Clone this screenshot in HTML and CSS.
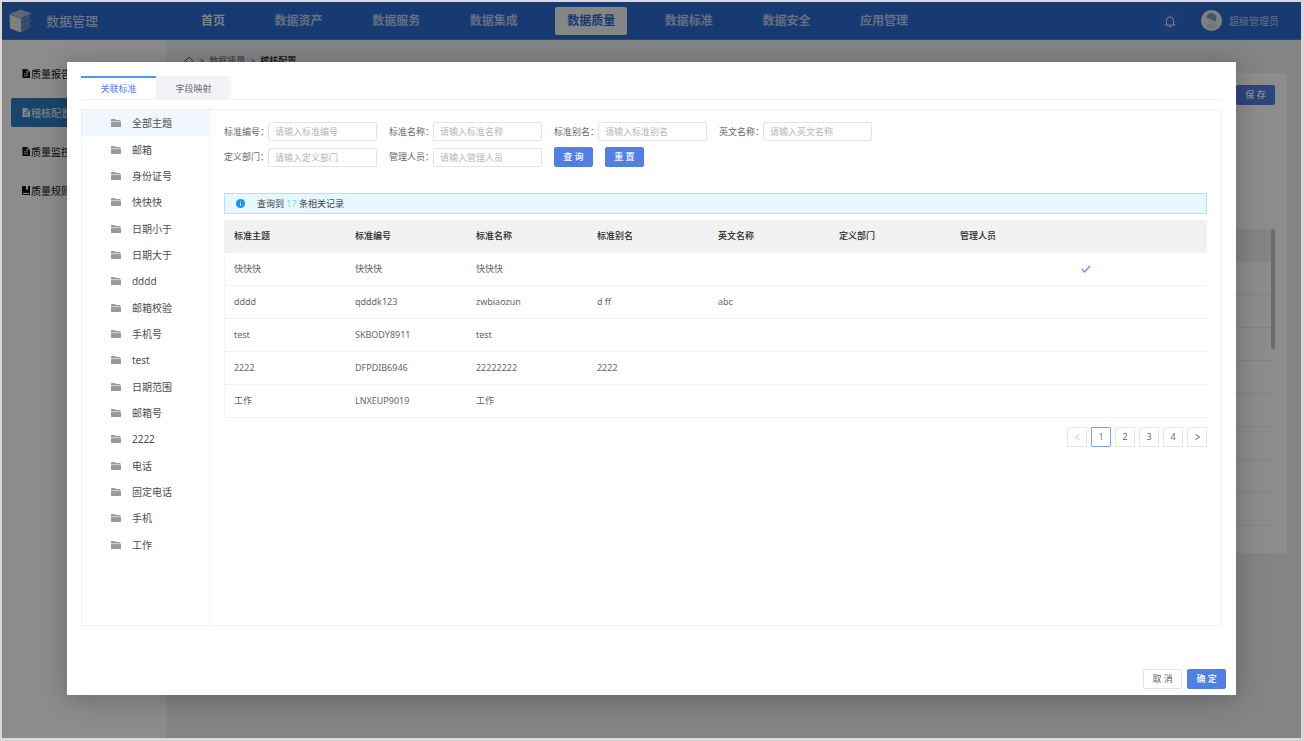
FILE: index.html
```html
<!DOCTYPE html>
<html lang="zh-CN">
<head>
<meta charset="utf-8">
<title>数据管理</title>
<link rel="stylesheet" href="styles.css">
</head>
<body>
<svg class="defs" aria-hidden="true">
  <symbol id="folder" viewBox="0 0 20 16"><path fill="#9c9c9c" d="M1 0h7l2 2h8a1 1 0 0 1 1 1v2H0V1a1 1 0 0 1 1-1z"/><path fill="#999" d="M0 6h20v9a1 1 0 0 1-1 1H1a1 1 0 0 1-1-1z"/><path stroke="#c8c8c8" d="M0 5.500h20"/></symbol>
  <symbol id="doc" viewBox="0 0 16 18"><path fill="currentColor" fill-rule="evenodd" d="M1 0h9l6 6v12H1zM9 2v5h5zM4 9v1.500h8V9zm0 4v1.500h8V13z"/></symbol>
  <symbol id="book" viewBox="0 0 16 18"><path fill="currentColor" fill-rule="evenodd" d="M2 0h6v8l2-2 2 2V0h4v18H2a2 2 0 0 1-2-2V2a2 2 0 0 1 2-2zm0 14v2h12v-2z"/></symbol>
</svg>
<div class="app">
  <header class="header">
    <div class="logo">
      <svg viewBox="0 0 48 48"><path fill="#a9bbd9" d="M1 10 23 1l22 7-21 10z"/><path fill="#ece8e2" d="M1 11l23 8v28L2 39z"/><path fill="#6b92d2" d="M24 19l21-10-5 10 5 2-5 9 5 2-5 7-16 8z"/><path fill="#4a7acb" d="M24 27l16-8 5 2-21 8zM24 38l16-8 5 2-21 8z"/></svg>
    </div>
    <h1 class="brand">数据管理</h1>
    <nav class="nav">
      <a class="home" href="#">首页</a><a href="#">数据资产</a><a href="#">数据服务</a><a href="#">数据集成</a><a class="active" href="#">数据质量</a><a href="#">数据标准</a><a href="#">数据安全</a><a href="#">应用管理</a>
    </nav>
    <div class="user">
      <button class="bell" aria-label="通知"><svg viewBox="0 0 24 24" fill="none" stroke="currentColor" stroke-width="2"><path d="M1 20h22M5 20v-9a7 7 0 0 1 14 0v9M12 4V1M9 23h6"/></svg></button>
      <svg class="avatar" viewBox="0 0 40 40"><circle cx="20" cy="20" r="20" fill="#efefe9"/><circle cx="20" cy="20" r="16" fill="#dfe9e8"/><path fill="#c3dcde" d="M9 32c2-9 20-9 22 0-6 6-16 6-22 0z"/><circle cx="20" cy="20" r="8" fill="#eadccf"/><path fill="#6f9eb3" d="M11 15c0-12 18-12 18 0v6c-5 1-9-5-18-6z"/></svg>
      <span>超级管理员</span>
    </div>
  </header>
  <div class="body">
    <aside class="side">
      <a href="#"><svg><use href="#doc"/></svg>质量报告</a>
      <a class="active" href="#"><svg><use href="#doc"/></svg>稽核配置</a>
      <a href="#"><svg><use href="#doc"/></svg>质量监控</a>
      <a href="#"><svg><use href="#book"/></svg>质量规则</a>
    </aside>
    <main class="content">
      <div class="crumbs"><svg viewBox="0 0 20 20" fill="none" stroke="currentColor" stroke-width="2"><path d="M1 11l9-9 9 9M4 10v9h12v-9"/></svg><span>&gt;</span><span>数据质量</span><span>&gt;</span><b>稽核配置</b></div>
      <section class="card">
        <button class="btn primary">保 存</button>
        <div class="back-list"><div class="back-rows"><i></i><i></i><i></i><i></i><i></i><i></i><i></i><i></i><i></i></div><div class="thumb"></div></div>
      </section>
    </main>
  </div>
  <div class="mask">
    <div class="modal" role="dialog" aria-label="关联标准">
      <div class="tabs" role="tablist"><button class="tab on" role="tab" aria-selected="true">关联标准</button><button class="tab" role="tab">字段映射</button></div>
      <div class="panel">
        <ul class="tree">
          <li class="on"><svg><use href="#folder"/></svg>全部主题</li>
          <li><svg><use href="#folder"/></svg>邮箱</li>
          <li><svg><use href="#folder"/></svg>身份证号</li>
          <li><svg><use href="#folder"/></svg>快快快</li>
          <li><svg><use href="#folder"/></svg>日期小于</li>
          <li><svg><use href="#folder"/></svg>日期大于</li>
          <li><svg><use href="#folder"/></svg>dddd</li>
          <li><svg><use href="#folder"/></svg>邮箱校验</li>
          <li><svg><use href="#folder"/></svg>手机号</li>
          <li><svg><use href="#folder"/></svg>test</li>
          <li><svg><use href="#folder"/></svg>日期范围</li>
          <li><svg><use href="#folder"/></svg>邮箱号</li>
          <li><svg><use href="#folder"/></svg>2222</li>
          <li><svg><use href="#folder"/></svg>电话</li>
          <li><svg><use href="#folder"/></svg>固定电话</li>
          <li><svg><use href="#folder"/></svg>手机</li>
          <li><svg><use href="#folder"/></svg>工作</li>
        </ul>
        <div class="main">
          <form class="filters">
            <div class="field"><label for="f1">标准编号：</label><input id="f1" placeholder="请输入标准编号"></div>
            <div class="field"><label for="f2">标准名称：</label><input id="f2" placeholder="请输入标准名称"></div>
            <div class="field"><label for="f3">标准别名：</label><input id="f3" placeholder="请输入标准别名"></div>
            <div class="field"><label for="f4">英文名称：</label><input id="f4" placeholder="请输入英文名称"></div>
            <div class="field"><label for="f5">定义部门：</label><input id="f5" placeholder="请输入定义部门"></div>
            <div class="field"><label for="f6">管理人员：</label><input id="f6" placeholder="请输入管理人员"></div>
            <div class="actions"><button type="button" class="btn primary">查 询</button><button type="button" class="btn primary">重 置</button></div>
          </form>
          <div class="alert"><svg viewBox="0 0 18 18"><circle cx="9" cy="9" r="9" fill="#1890ff"/><path stroke="#d6ecff" stroke-width="2" d="M9 4v2M9 8v6"/></svg><span>查询到 <em>17</em> 条相关记录</span></div>
          <table class="grid">
            <thead><tr><th>标准主题</th><th>标准编号</th><th>标准名称</th><th>标准别名</th><th>英文名称</th><th>定义部门</th><th>管理人员</th><th class="last"></th></tr></thead>
            <tbody>
              <tr><td>快快快</td><td>快快快</td><td>快快快</td><td></td><td></td><td></td><td></td><td><svg class="check" viewBox="0 0 20 16" fill="none" stroke="#5b8def" stroke-width="2.400"><path d="M2 8l5 6L18 2"/></svg></td></tr>
              <tr><td>dddd</td><td>qdddk123</td><td>zwbiaozun</td><td>d ff</td><td>abc</td><td></td><td></td><td></td></tr>
              <tr><td>test</td><td>SKBODY8911</td><td>test</td><td></td><td></td><td></td><td></td><td></td></tr>
              <tr><td>2222</td><td>DFPDIB6946</td><td>22222222</td><td>2222</td><td></td><td></td><td></td><td></td></tr>
              <tr><td>工作</td><td>LNXEUP9019</td><td>工作</td><td></td><td></td><td></td><td></td><td></td></tr>
            </tbody>
          </table>
          <div class="pages">
            <button class="off" aria-label="上一页" disabled><svg viewBox="0 0 10 12"><path d="M8 2L2 6l6 4"/></svg></button><button class="on">1</button><button>2</button><button>3</button><button>4</button><button aria-label="下一页"><svg viewBox="0 0 10 12"><path d="M2 2l6 4-6 4"/></svg></button>
          </div>
        </div>
      </div>
      <footer class="foot"><button class="btn">取 消</button><button class="btn primary">确 定</button></footer>
    </div>
  </div>
</div>
</body>
</html>
```
FILE: styles.css
```css
* { box-sizing: border-box; }
body {
  margin: 0;
  padding: 2px 3px 3px 2px;
  min-height: 100vh;
  display: flex;
  background: #d9d9d9;
  color: #666;
  font: 9px/14px "Noto Sans", "Noto Sans CJK SC", sans-serif;
}
button, input { font: inherit; color: inherit; margin: 0; }
a { color: inherit; text-decoration: none; }
.defs { position: absolute; width: 0; height: 0; }

.app { position: relative; flex: 1; display: flex; flex-direction: column; }
.header {
  display: flex;
  align-items: center;
  height: 38px;
  background: #2c6ad1;
  border-bottom: 1px solid #4d83da;
  color: #b9cbea;
}
.logo { width: 38px; height: 37px; padding: 7px; background: #3069c8; }
.logo svg { display: block; width: 24px; height: 24px; }
.brand { margin: 0 0 0 6px; width: 143px; font-size: 13px; font-weight: 400; line-height: 18px; color: #d5e1f5; }
.nav { flex: 0 0 731px; display: flex; justify-content: space-between; padding-top: 1px; font-size: 12px; font-weight: 700; line-height: 28px; }
.nav a { padding: 0 12px; border-radius: 2px; }
.nav .home { color: #e4ecf8; }
.nav .active { background: #f4f4f4; color: #2c6ad1; }
.user { margin-left: auto; padding-right: 22px; display: flex; align-items: center; font-size: 10px; }
.bell { width: 24px; height: 24px; padding: 6px; border: 0; border-radius: 50%; background: #316dd1; color: #dce6f6; }
.bell svg { display: block; width: 12px; height: 12px; }
.avatar { width: 21px; height: 21px; margin: 0 7px 0 19px; }

.body { flex: 1; display: flex; }
.side { width: 164px; padding: 19px 9px; display: flex; flex-direction: column; gap: 10px; background: #fff; color: #111; font-size: 10px; }
.side a { display: flex; align-items: center; gap: 1px; height: 29px; padding-left: 11px; border-radius: 2px; white-space: nowrap; }
.side svg { width: 8px; height: 9px; }
.side .active { background: #2f7fc4; color: #eef4fb; }
.content { flex: 1; padding: 14px 14px 0 18px; background: #eff0f2; }
.crumbs { display: flex; align-items: center; gap: 5px; height: 14px; }
.crumbs b { font-weight: 500; color: #222; }
.crumbs svg { width: 10px; height: 10px; }
.card { margin-top: 5px; min-height: 480px; padding: 12px 12px 0; background: #fff; }
.card > .btn { display: block; margin-left: auto; }
.back-list { display: flex; margin-top: 124px; }
.back-rows { flex: 1; }
.back-rows i { display: block; height: 33px; border-bottom: 1px solid #eee; }
.back-rows i:first-child { background: #f1f1f1; }
.thumb { width: 4px; height: 120px; border-radius: 2px; background: #c4c5c9; }

.mask { position: absolute; inset: 0; padding: 60px 0; background: rgba(0, 0, 0, .45); }
.modal { width: 90%; min-height: 633px; margin: 0 auto; padding: 14px 14px 6px; display: flex; flex-direction: column; background: #fff; box-shadow: 0 3px 26px rgba(0, 0, 0, .25); }
.tabs { display: flex; border-bottom: 1px solid #f2f3f5; }
.tab { width: 75px; height: 23px; padding: 0; border: 0; border-top: 2px solid #f2f3f6; background: #f2f3f6; }
.tab.on { background: #fff; border-color: #409eff; color: #4a7fea; }
.panel { display: flex; margin-top: 9px; min-height: 517px; border: 1px solid #f0f0f0; }
.tree { flex: 0 0 128px; margin: 0; padding: 0; align-self: stretch; list-style: none; border-right: 1px solid #f4f4f4; display: grid; grid-template-rows: repeat(17, 1fr); padding-bottom: 67px; font-size: 10px; }
.tree li { display: flex; align-items: center; gap: 11px; padding-left: 29px; color: #4d4d4d; }
.tree svg { width: 10px; height: 8px; }
.tree .on { background: #f0f7ff; }

.main { flex: 1; min-width: 0; padding: 12px 14px; }
.filters { display: grid; grid-template-columns: repeat(4, 153px); gap: 6px 12px; }
.field { display: flex; align-items: center; }
.field label { width: 44px; white-space: nowrap; }
.field input { flex: 1; min-width: 0; height: 19px; padding: 0 6px; border: 1px solid #e3e3e3; border-radius: 2px; background: #fff; }
.field input::placeholder { color: #b5b5b5; }
.actions { display: flex; gap: 12px; }
.btn { width: 39px; height: 20px; padding: 0; border: 1px solid #e3e3e3; border-radius: 2px; background: #fff; line-height: 18px; white-space: nowrap; }
.primary { background: #5080e4; border-color: #5080e4; color: #fff; font-weight: 500; }
.alert { display: flex; align-items: center; gap: 12px; height: 21px; margin-top: 26px; padding-left: 11px; background: #e6f7ff; border: 1px solid #b3e1fc; color: #444; }
.alert svg { width: 9px; height: 9px; }
.alert em { font-style: normal; color: #91d0fb; }

.grid { width: 100%; margin-top: 6px; table-layout: fixed; border-collapse: separate; border-spacing: 0; border-left: 1px solid #f4f4f4; }
.grid th, .grid td { height: 33px; padding: 0 0 0 9px; text-align: left; border-bottom: 1px solid #f2f2f2; }
.grid th { background: #f1f1f1; color: #262626; font-weight: 500; }
.grid .last { width: 135px; }
.check { display: block; width: 10px; height: 8px; }
.pages { display: flex; justify-content: flex-end; gap: 4px; margin-top: 9px; }
.pages button { display: flex; align-items: center; justify-content: center; width: 20px; height: 20px; padding: 0; border: 1px solid #e6e6e6; border-radius: 1px; background: #fff; }
.pages .on { border-color: #7ba3f3; color: #5080e4; }
.pages .off { color: #c8c8c8; }
.pages svg { width: 7px; height: 8px; fill: none; stroke: currentColor; stroke-width: 1.500; }
.foot { display: flex; justify-content: flex-end; gap: 5px; margin: auto -4px 0 0; }
```
